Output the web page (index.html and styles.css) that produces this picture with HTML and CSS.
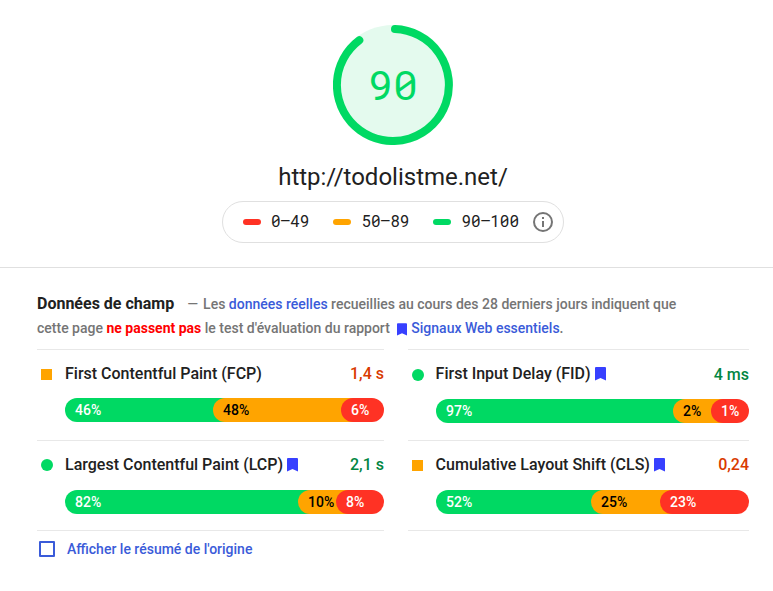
FILE: index.html
```html
<!DOCTYPE html>
<html lang="fr">
<head>
<meta charset="utf-8">
<title>PageSpeed</title>
<link rel="stylesheet" href="styles.css">
</head>
<body>
<header class="summary">
  <div class="gauge">
    <svg class="gauge-ring" viewBox="0 0 120 120" aria-hidden="true"><circle cx="60" cy="60" r="60" fill="#e4faee"/><path d="M62 4.04A56 56 0 1 1 26.3 15.2" fill="none" stroke="#00d963" stroke-width="8" stroke-linecap="round"/></svg>
    <span class="score mono">90</span>
  </div>
  <h1 class="url">http://todolistme.net/</h1>
  <div class="scale">
    <span class="range"><i class="dash bad"></i><span class="mono">0–49</span></span>
    <span class="range"><i class="dash mid"></i><span class="mono">50–89</span></span>
    <span class="range"><i class="dash good"></i><span class="mono">90–100</span></span>
    <svg class="info" viewBox="0 0 20 20"><circle cx="10" cy="10" r="9" fill="none" stroke="#757575" stroke-width="2"/><path d="M9 5h2v2H9zM9 9h2v6H9z" fill="#757575"/></svg>
  </div>
</header>
<main class="field">
  <p class="intro"><strong class="heading">Données de champ</strong><span class="sep">—</span> Les <a>données réelles</a> recueillies au cours des 28 derniers jours indiquent que<br>cette page <b>ne passent pas</b> le test d'évaluation du rapport <svg class="mark small" viewBox="0 0 11 14"><path d="M0 1Q0 0 1 0H10Q11 0 11 1V13.5L5.5 11 0 13.5z"/></svg><a>Signaux Web essentiels</a>.</p>
  <div class="metrics">
    <section class="metric">
      <div class="row"><i class="dot square"></i><span>First Contentful Paint (FCP)</span><span class="value slow">1,4 s</span></div>
      <div class="bar"><span class="seg good" style="width:160px">46%</span><span class="seg mid" style="width:140px">48%</span><span class="seg bad">6%</span></div>
    </section>
    <section class="metric right first">
      <div class="row"><i class="dot"></i><span>First Input Delay (FID)</span><svg class="mark" viewBox="0 0 11 14"><path d="M0 1Q0 0 1 0H10Q11 0 11 1V13.5L5.5 11 0 13.5z"/></svg><span class="value fast">4 ms</span></div>
      <div class="bar"><span class="seg good" style="width:249px">97%</span><span class="seg mid" style="width:50px">2%</span><span class="seg bad">1%</span></div>
    </section>
    <section class="metric second">
      <div class="row"><i class="dot"></i><span>Largest Contentful Paint (LCP)</span><svg class="mark" viewBox="0 0 11 14"><path d="M0 1Q0 0 1 0H10Q11 0 11 1V13.5L5.5 11 0 13.5z"/></svg><span class="value fast">2,1 s</span></div>
      <div class="bar"><span class="seg good" style="width:245px">82%</span><span class="seg mid" style="width:50px">10%</span><span class="seg bad">8%</span></div>
    </section>
    <section class="metric right second">
      <div class="row"><i class="dot square"></i><span>Cumulative Layout Shift (CLS)</span><svg class="mark" viewBox="0 0 11 14"><path d="M0 1Q0 0 1 0H10Q11 0 11 1V13.5L5.5 11 0 13.5z"/></svg><span class="value slow">0,24</span></div>
      <div class="bar"><span class="seg good" style="width:167px">52%</span><span class="seg mid" style="width:81px">25%</span><span class="seg bad">23%</span></div>
    </section>
  </div>
  <label class="origin"><i class="check"></i>Afficher le résumé de l'origine</label>
</main>
</body>
</html>
```
FILE: styles.css
```css
* { box-sizing: border-box; }
body { margin: 0; background: #fff; color: #212121; font-family: Roboto, sans-serif; }
.mono { font-family: "Roboto Mono", Inter, monospace; font-feature-settings: "zero", "tnum"; }
.summary { height: 268px; padding: 25px 0 0 13px; border-bottom: 1px solid #e0e0e0; display: flex; flex-direction: column; align-items: center; }
.gauge { width: 120px; height: 120px; display: grid; place-items: center; }
.gauge-ring, .score { grid-area: 1 / 1; }
.gauge-ring { width: 120px; height: 120px; }
.score { color: #00d963; font-size: 41.5px; line-height: 48px; margin-bottom: 2px; }
.url { margin: 16px 0 0; font-size: 24px; line-height: 32px; font-weight: 400; white-space: nowrap; }
.scale { margin-top: 8px; width: 342px; height: 42px; border: 1px solid #e0e0e0; border-radius: 21px; display: flex; align-items: center; padding: 0 10px 0 20px; font-size: 16px; }
.range { display: flex; align-items: center; gap: 10px; margin-right: 24px; white-space: nowrap; }
.range .mono { line-height: 20px; margin-bottom: 2px; }
.range:nth-child(3) { margin-right: 14px; }
.dash { width: 18px; height: 6px; border-radius: 3px; }
.info { width: 20px; height: 20px; flex: none; }
.good { background: #00d963; }
.mid { background: #ffa400; }
.bad { background: #ff3224; }
.field { padding: 24px 24px 0 37px; }
.intro { margin: 0; font-size: 14px; font-weight: 500; line-height: 24px; color: #757575; white-space: nowrap; }
.heading { font-size: 16px; font-weight: 700; color: #212121; margin-right: 13px; }
.sep { font-weight: 400; margin-right: 1.5px; }
a { color: #3a5bd9; }
.intro b { color: #f00; font-weight: 700; }
.mark { width: 11px; height: 14px; fill: #3740ff; flex: none; margin: 1px 0 0 4px; }
.small { width: 10px; height: 13px; vertical-align: -3px; margin: 0 4px 0 4px; }
.metrics { margin-top: 9px; display: grid; grid-template-columns: 347px 341px; column-gap: 24px; grid-template-rows: 91px 91px; }
.metric { border-top: 1px solid #e8e8e8; padding-top: 11px; }
.second { border-bottom: 1px solid #e8e8e8; }
.row { display: flex; align-items: center; height: 24px; font-size: 16px; font-weight: 500; white-space: nowrap; }
.dot { width: 12px; height: 12px; border-radius: 50%; background: #00d963; margin: 4px 12px 0 4px; flex: none; }
.second .dot { margin-top: 2px; }
.square { width: 11px; height: 11px; border-radius: 0; background: #ffa400; margin-top: 3px; margin-right: 13px; }
.second .square { margin-top: 3px; }
.right .square, .right .dot { margin-right: 11.6px; }
.right .square { margin-right: 12.6px; }
.right .bar { margin-left: 28px; }
.value { margin-left: auto; }
.first .value { margin-top: 2px; }
.slow { color: #d93a00; }
.fast { color: #018642; }
.bar { display: flex; height: 24px; margin: 13px 0 0 28px; font-size: 14px; line-height: 24px; font-weight: 500; }
.first .bar, .second .bar { margin-top: 14px; }
.seg { border-radius: 12px 0 0 12px; padding-left: 10px; color: #fff; flex: none; }
.seg + .seg { margin-left: -12px; }
.seg.mid { color: #000; }
.seg.bad { flex: 1; border-radius: 12px; }
.origin { display: flex; align-items: center; height: 36px; font-size: 14px; font-weight: 500; color: #3a5bd9; }
.check { width: 16px; height: 16px; border: 2px solid #3a5bd9; border-radius: 1px; margin: 0 12px 0 2px; }
```
